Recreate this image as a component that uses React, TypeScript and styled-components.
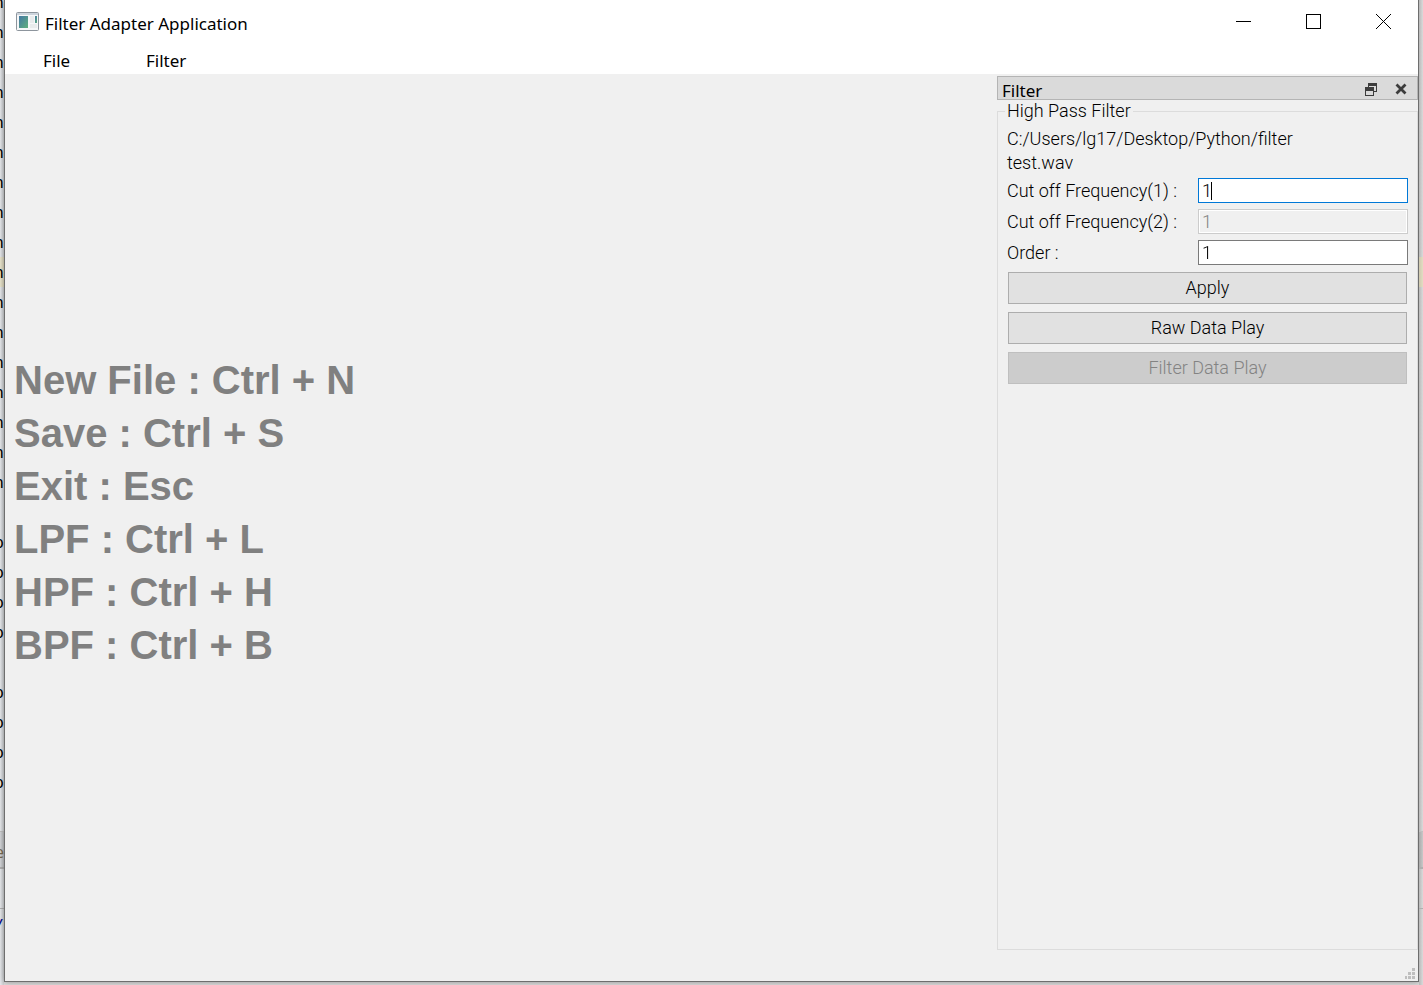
import React, { useState } from 'react';
import styled, { createGlobalStyle } from 'styled-components';

const GlobalStyle = createGlobalStyle`
  *, *::before, *::after { box-sizing: border-box; }
  body { margin: 0; background: #dcdcdc; }
  button, input, legend { font: inherit; color: inherit; }
`;

const uiFont = `'Noto Sans', 'Open Sans', sans-serif`;
const panelFont = `Roboto, 'Liberation Sans', sans-serif`;

const Desktop = styled.div`
  display: grid;
  grid-template-columns: 4px minmax(0, 1fr) 4px;
  height: 100vh;
  overflow: hidden;
`;

const Gutter = styled.div<{ $right?: boolean }>`
  display: flex;
  flex-direction: column;
  min-height: 0;
  overflow: hidden;
  background: ${p => (p.$right ? 'linear-gradient(90deg, #b9b9b9, #dadada)' : 'linear-gradient(90deg, #e8eaee, #ccced0)')};
`;

const Code = styled.div`
  flex: 1;
  min-height: 0;
  overflow: hidden;
`;

const CodeLines = styled.div`
  margin-top: -13px;
`;

const CodeLine = styled.div<{ $active?: boolean }>`
  display: flex;
  justify-content: flex-end;
  height: 30px;
  font: 16px/32px 'DejaVu Sans Mono', monospace;
  color: #000;
  background: ${p => (p.$active ? 'rgba(240, 225, 160, 0.4)' : 'transparent')};
`;

const TabBand = styled.div`
  display: flex;
  justify-content: flex-end;
  height: 38px;
  border-top: 1px solid #c0c0c0;
  border-bottom: 2px solid #b0b0b0;
  background: rgba(0, 0, 0, 0.08);
  font: 16px/40px 'Open Sans', sans-serif;
  color: #7a6a50;
`;

const ToolBand = styled.div`
  height: 40px;
  border-bottom: 1px solid #b0b0b0;
`;

const ConsoleBand = styled.div`
  display: flex;
  justify-content: flex-end;
  height: 76px;
  font: 16px/34px 'DejaVu Sans Mono', monospace;
  color: #00008b;
`;

const Frame = styled.div`
  display: flex;
  flex-direction: column;
  min-height: 0;
  margin-bottom: 3px;
  border: 1px solid #6e6e6e;
  border-top: 0;
  background: #f0f0f0;
  box-shadow: 0 0 6px rgba(0, 0, 0, 0.35);
`;

const TitleBar = styled.header`
  display: flex;
  align-items: center;
  height: 44px;
  padding: 0 0 2px 11px;
  background: #fff;
  font: 17px/24px ${uiFont};
  color: #000;
`;

const Title = styled.h1`
  flex: 1;
  margin: 5px 0 0 6px;
  font: inherit;
`;

const CaptionButton = styled.button`
  display: flex;
  align-items: center;
  justify-content: center;
  width: 70px;
  height: 42px;
  padding: 0;
  border: 0;
  background: none;
`;

const MenuBar = styled.nav`
  display: flex;
  gap: 32px;
  height: 30px;
  padding-left: 26px;
  background: #fff;
`;

const MenuButton = styled.button`
  min-width: 71px;
  padding: 4px 12px 0;
  border: 0;
  background: none;
  font: 17px/24px ${uiFont};
  text-align: left;
`;

const Body = styled.div`
  display: flex;
  flex: 1;
  min-height: 0;
`;

const Shortcuts = styled.main`
  display: flex;
  flex: 1;
  flex-direction: column;
  justify-content: center;
  padding: 2px 0 0 9px;
  font: bold 40px/53px 'Liberation Sans', Arial, sans-serif;
  color: #808080;
`;

const Dock = styled.aside`
  display: flex;
  flex-direction: column;
  width: 30%;
  max-width: 421px;
  padding-top: 2px;
`;

const DockTitle = styled.div`
  display: flex;
  align-items: center;
  height: 24px;
  padding: 2px 9px 0 4px;
  border: 1px solid #b4b4b4;
  background: #dadada;
  font: 17px/20px ${uiFont};
  color: #000;
`;

const DockName = styled.h2`
  flex: 1;
  margin: 4px 0 0;
  font: inherit;
`;

const DockButton = styled.button`
  display: flex;
  align-items: center;
  justify-content: center;
  width: 14px;
  height: 14px;
  margin-left: 16px;
  padding: 0;
  border: 0;
  background: none;
`;

const Group = styled.fieldset`
  flex: 1;
  min-width: 0;
  margin: 0;
  padding: 5px 9px 0;
  border: 1px solid #dcdcdc;
  font: 300 18px/24px ${panelFont};
  color: #000;
`;

const GroupName = styled.legend`
  margin-left: -2px;
  padding: 0 2px;
  line-height: 22px;
`;

const FilePath = styled.p`
  margin: 0 0 3px;
`;

const Field = styled.div`
  display: flex;
  align-items: center;
  height: 25px;
  margin-bottom: 6px;
`;

const FieldLabel = styled.label`
  flex: 1;
`;

const InputBox = styled.div`
  position: relative;
  display: flex;
`;

const FieldInput = styled.input`
  width: 210px;
  height: 25px;
  padding: 0 3px;
  border: 1px solid #7a7a7a;
  outline: 0;
  background: #fff;
  caret-color: transparent;

  &:focus { border-color: #0078d7; }

  &:disabled {
    border-color: #ccc;
    background: #f0f0f0;
    box-shadow: inset 0 0 0 1px #fff;
    color: #838383;
  }
`;

const Caret = styled.span`
  position: absolute;
  top: 4px;
  width: 1px;
  height: 18px;
  background: #000;
  visibility: hidden;
  pointer-events: none;

  input:focus + & { visibility: visible; }
`;

const Actions = styled.div`
  display: grid;
  gap: 8px;
  padding: 1px 1px 0;
`;

const ActionButton = styled.button`
  height: 32px;
  padding: 0;
  border: 1px solid #adadad;
  background: #e1e1e1;

  &:disabled {
    border-color: #bfbfbf;
    background: #ccc;
    color: #838383;
  }
`;

const StatusBar = styled.footer`
  display: flex;
  align-items: flex-end;
  justify-content: flex-end;
  height: 31px;
  padding: 0 3px 2px 0;
`;

const codeLines = [
  ...Array(17).fill('n'), '', ...Array(4).fill('p'), '', ...Array(4).fill('p'), '',
];

const shortcuts = [
  'New File : Ctrl + N', 'Save : Ctrl + S', 'Exit : Esc',
  'LPF : Ctrl + L', 'HPF : Ctrl + H', 'BPF : Ctrl + B',
];

function EditorEdge({ right }: { right?: boolean }) {
  return (
    <Gutter $right={right} aria-hidden="true">
      <Code>
        <CodeLines>
          {codeLines.map((text, i) => (
            <CodeLine key={i} $active={i === 9}>{right ? '' : text}</CodeLine>
          ))}
        </CodeLines>
      </Code>
      <TabBand>{right ? '' : 'e'}</TabBand>
      <ToolBand />
      <ConsoleBand>{right ? '' : '/'}</ConsoleBand>
    </Gutter>
  );
}

function AppIcon() {
  return (
    <svg width="23" height="19" viewBox="0 0 23 19" aria-hidden="true">
      <defs>
        <linearGradient id="pane" x1="0" y1="0" x2="1" y2="1">
          <stop offset="0" stopColor="#4478a4" />
          <stop offset="1" stopColor="#5fb07c" />
        </linearGradient>
      </defs>
      <rect x="0.5" y="0.5" width="22" height="18" rx="1" fill="#f6f7f8" stroke="#8d959d" />
      <rect x="1" y="1" width="21" height="2" fill="#ccd4dc" />
      <rect x="3" y="4" width="9" height="12" fill="url(#pane)" />
      <rect x="14" y="4" width="4" height="7" fill="#e9ebec" />
      <rect x="14" y="12" width="7" height="4" fill="#e9ebec" />
      <rect x="19" y="4" width="2" height="7" fill="url(#pane)" />
    </svg>
  );
}

interface NumberFieldProps {
  id: string;
  label: string;
  value: string;
  onChange?: (value: string) => void;
  autoFocus?: boolean;
  disabled?: boolean;
}

function NumberField({ id, label, value, onChange, autoFocus, disabled }: NumberFieldProps) {
  return (
    <Field>
      <FieldLabel htmlFor={id}>{label}</FieldLabel>
      <InputBox>
        <FieldInput
          id={id}
          value={value}
          autoFocus={autoFocus}
          disabled={disabled}
          onChange={e => onChange?.(e.target.value)}
        />
        <Caret style={{ left: `calc(3px + ${value.length}ch)` }} />
      </InputBox>
    </Field>
  );
}

export default function App() {
  const [cutoff1, setCutoff1] = useState('1');
  const [order, setOrder] = useState('1');

  return (
    <>
      <GlobalStyle />
      <Desktop>
        <EditorEdge />
        <Frame>
          <TitleBar>
            <AppIcon />
            <Title>Filter Adapter Application</Title>
            <CaptionButton aria-label="Minimize">
              <svg width="15" height="15" shapeRendering="crispEdges"><path d="M0 7.5H15" stroke="#000" /></svg>
            </CaptionButton>
            <CaptionButton aria-label="Maximize">
              <svg width="15" height="15" shapeRendering="crispEdges"><rect x="0.5" y="0.5" width="14" height="14" fill="none" stroke="#000" /></svg>
            </CaptionButton>
            <CaptionButton aria-label="Close">
              <svg width="15" height="15"><path d="M0 0L15 15M15 0L0 15" stroke="#000" /></svg>
            </CaptionButton>
          </TitleBar>
          <MenuBar>
            <MenuButton>File</MenuButton>
            <MenuButton>Filter</MenuButton>
          </MenuBar>
          <Body>
            <Shortcuts>
              {shortcuts.map(text => <div key={text}>{text}</div>)}
            </Shortcuts>
            <Dock>
              <DockTitle>
                <DockName>Filter</DockName>
                <DockButton aria-label="Float">
                  <svg width="12" height="13" viewBox="0 0 12 13" shapeRendering="crispEdges" fill="#3c3c3c">
                    <path d="M3 0H12V9H9V8H11V3H4V4H3Z" />
                    <path d="M0 4H9V13H0ZM1 8V12H8V8Z" fillRule="evenodd" />
                  </svg>
                </DockButton>
                <DockButton aria-label="Close panel">
                  <svg width="12" height="12"><path d="M1.5 1.5L10.5 10.5M10.5 1.5L1.5 10.5" stroke="#3c3c3c" strokeWidth="2.8" /></svg>
                </DockButton>
              </DockTitle>
              <Group>
                <GroupName>High Pass Filter</GroupName>
                <FilePath>C:/Users/lg17/Desktop/Python/filter<br />test.wav</FilePath>
                <NumberField id="cutoff1" label="Cut off Frequency(1) :" value={cutoff1} onChange={setCutoff1} autoFocus />
                <NumberField id="cutoff2" label="Cut off Frequency(2) :" value="1" disabled />
                <NumberField id="order" label="Order :" value={order} onChange={setOrder} />
                <Actions>
                  <ActionButton type="button">Apply</ActionButton>
                  <ActionButton type="button">Raw Data Play</ActionButton>
                  <ActionButton type="button" disabled>Filter Data Play</ActionButton>
                </Actions>
              </Group>
            </Dock>
          </Body>
          <StatusBar>
            <svg width="11" height="11" viewBox="0 0 11 11" fill="#bfbfbf" shapeRendering="crispEdges" aria-hidden="true">
              <path d="M8 0h3v3h-3zM4 4h3v3h-3zM8 4h3v3h-3zM1 8h2v3h-2zM4 8h3v3h-3zM8 8h3v3h-3z" />
            </svg>
          </StatusBar>
        </Frame>
        <EditorEdge right />
      </Desktop>
    </>
  );
}
